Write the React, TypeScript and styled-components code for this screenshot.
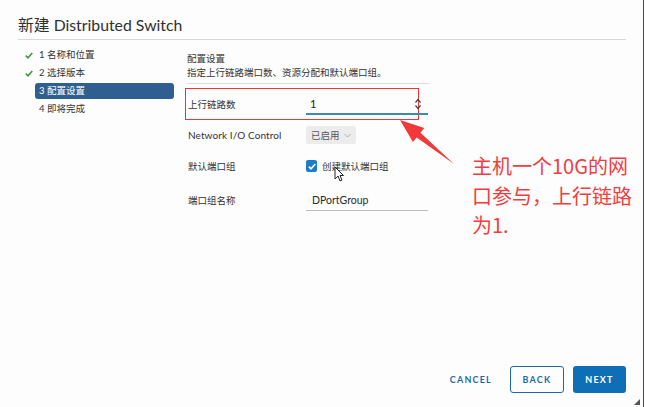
import styled, { createGlobalStyle } from "styled-components";

const GlobalStyle = createGlobalStyle`
  html, body {
    margin: 0;
    background: #ffffff;
    font-family: Lato, "Noto Sans CJK SC", sans-serif;
    color: #333;
  }
`;

const blue = "#1b6aa5";

const Page = styled.div`
  position: relative;
  width: 645px;
  height: 407px;
  overflow: hidden;
`;

const Dialog = styled.div`
  position: relative;
  box-sizing: border-box;
  width: 644px;
  height: 407px;
  background: #fdfdfd;
  border-right: 1px solid #4a4a4a;
  display: flex;
  flex-direction: column;
`;

const Header = styled.div`
  box-sizing: border-box;
  height: 40px;
  margin: 0 17px 0 18px;
  padding-top: 15px;
  border-bottom: 1px solid #d9d9d9;
`;

const Title = styled.h1`
  margin: 0;
  font-size: 15.8px;
  line-height: 20px;
  font-weight: 400;
  color: #2f2f2f;
`;

const Body = styled.div`
  flex: 1;
  display: flex;
`;

const Nav = styled.ul`
  list-style: none;
  margin: 0;
  padding: 6px 0 0 25px;
  width: 149px;
`;

const NavItem = styled.li`
  height: 18px;
  display: flex;
  align-items: center;
`;

const NavIcon = styled.span`
  width: 10px;
  display: flex;
  align-items: center;
`;

const NavLabel = styled.span<{ $active?: boolean }>`
  box-sizing: border-box;
  width: 139px;
  height: 16px;
  padding-left: 4px;
  border-radius: 3px;
  font-size: 9.5px;
  line-height: 16px;
  color: ${(p) => (p.$active ? "#ffffff" : "#333")};
  background: ${(p) => (p.$active ? "#2f5f8e" : "transparent")};
`;

const Content = styled.div`
  margin-left: 13px;
  padding-top: 12px;
  width: 242px;
`;

const SectionTitle = styled.div`
  font-size: 9.5px;
  line-height: 14px;
  color: #333;
`;

const SectionDesc = styled.div`
  font-size: 9.5px;
  line-height: 14px;
  color: #333;
  padding-bottom: 3px;
  border-bottom: 1px solid #dcdcdc;
  margin-bottom: 4px;
`;

const FieldRow = styled.div<{ $h: number; $highlight?: boolean }>`
  position: relative;
  height: ${(p) => p.$h}px;
  display: flex;
  align-items: center;

  &::before {
    content: "";
    display: ${(p) => (p.$highlight ? "block" : "none")};
    position: absolute;
    left: -2px;
    top: 0;
    width: 234px;
    height: ${(p) => p.$h}px;
    box-sizing: border-box;
    border: 1px solid #ef3535;
  }
`;

const FieldLabel = styled.span`
  width: 118px;
  padding-left: 1px;
  font-size: 9.5px;
  color: #333;
  flex-shrink: 0;
  white-space: nowrap;
`;

const LatinLabel = styled(FieldLabel)`
  font-size: 10px;
  letter-spacing: 0.1px;
`;

const NumberInput = styled.div`
  position: relative;
  box-sizing: border-box;
  width: 122px;
  height: 20px;
  padding-left: 4px;
  margin-top: 2px;
  border-bottom: 2px solid #3b8bb0;
  font-size: 11px;
  line-height: 18px;
  color: #222;
`;

const Spinner = styled.svg`
  position: absolute;
  right: 7px;
  top: 3px;
`;

const Select = styled.div`
  box-sizing: border-box;
  height: 18px;
  padding: 0 5px;
  background: #ececec;
  border-radius: 2px;
  display: flex;
  align-items: center;
  gap: 4px;
  font-size: 9.5px;
  color: #555;
  white-space: nowrap;
`;

const CheckWrap = styled.label`
  display: flex;
  align-items: center;
  gap: 5px;
  font-size: 9.5px;
  color: #333;
`;

const CheckBox = styled.span`
  width: 11px;
  height: 12px;
  border-radius: 2px;
  background: #1a7cc9;
  display: flex;
  align-items: center;
  justify-content: center;
`;

const TextInput = styled.div`
  box-sizing: border-box;
  width: 122px;
  height: 20px;
  padding-left: 6px;
  margin-top: 1px;
  border-bottom: 1px solid #bdbdbd;
  font-size: 10.5px;
  line-height: 19px;
  color: #2a2a2a;
`;

const Footer = styled.div`
  display: flex;
  justify-content: flex-end;
  align-items: center;
  padding: 0 17px 14px 0;
`;

const Button = styled.button<{ $variant: "link" | "outline" | "primary" }>`
  box-sizing: border-box;
  height: 27px;
  width: ${(p) => (p.$variant === "link" ? "auto" : p.$variant === "outline" ? "54px" : "53px")};
  margin-left: ${(p) => (p.$variant === "primary" ? "9px" : "0")};
  margin-right: ${(p) => (p.$variant === "link" ? "18px" : "0")};
  padding: 0;
  border-radius: 3px;
  border: ${(p) => (p.$variant === "outline" ? `1px solid ${blue}` : "none")};
  background: ${(p) => (p.$variant === "primary" ? "#0e6fb6" : "transparent")};
  color: ${(p) => (p.$variant === "primary" ? "#ffffff" : blue)};
  font-family: Lato, sans-serif;
  font-size: 9px;
  font-weight: 700;
  letter-spacing: 1.2px;
`;

const Grip = styled.svg`
  position: absolute;
  right: 3px;
  bottom: 2px;
`;

const Cursor = styled.svg`
  position: absolute;
  left: 334px;
  top: 166px;
`;

const Arrow = styled.svg`
  position: absolute;
  left: 0;
  top: 0;
  pointer-events: none;
`;

const Note = styled.div`
  position: absolute;
  left: 472px;
  top: 151px;
  font-family: "Noto Sans CJK SC", sans-serif;
  font-size: 20px;
  line-height: 29.5px;
  color: #f03e3e;
`;

const Check = ({ color }: { color: string }) => (
  <svg width="8" height="7" viewBox="0 0 8 7">
    <path d="M0.8 3.6 L3 5.8 L7.3 1" fill="none" stroke={color} strokeWidth="1.6" />
  </svg>
);

const steps = [
  { label: "1 名称和位置", done: true },
  { label: "2 选择版本", done: true },
  { label: "3 配置设置", active: true },
  { label: "4 即将完成" },
];

export default function App() {
  return (
    <Page>
      <GlobalStyle />
      <Dialog>
        <Header>
          <Title>新建 Distributed Switch</Title>
        </Header>
        <Body>
          <Nav>
            {steps.map((s) => (
              <NavItem key={s.label}>
                <NavIcon>{s.done && <Check color="#3c9a3c" />}</NavIcon>
                <NavLabel $active={s.active}>{s.label}</NavLabel>
              </NavItem>
            ))}
          </Nav>
          <Content>
            <SectionTitle>配置设置</SectionTitle>
            <SectionDesc>指定上行链路端口数、资源分配和默认端口组。</SectionDesc>
            <FieldRow $h={32} $highlight>
              <FieldLabel>上行链路数</FieldLabel>
              <NumberInput>
                1
                <Spinner width="6" height="12" viewBox="0 0 6 12">
                  <path d="M0.5 4.5 L3 1.5 L5.5 4.5" fill="none" stroke="#444" strokeWidth="1.2" />
                  <path d="M0.5 7.5 L3 10.5 L5.5 7.5" fill="none" stroke="#444" strokeWidth="1.2" />
                </Spinner>
              </NumberInput>
            </FieldRow>
            <FieldRow $h={30}>
              <LatinLabel>Network I/O Control</LatinLabel>
              <Select>
                已启用
                <svg width="7" height="5" viewBox="0 0 7 5">
                  <path d="M0.5 1 L3.5 4 L6.5 1" fill="none" stroke="#aaa" strokeWidth="0.9" />
                </svg>
              </Select>
            </FieldRow>
            <FieldRow $h={32}>
              <FieldLabel>默认端口组</FieldLabel>
              <CheckWrap>
                <CheckBox>
                  <Check color="#ffffff" />
                </CheckBox>
                创建默认端口组
              </CheckWrap>
            </FieldRow>
            <FieldRow $h={36}>
              <FieldLabel>端口组名称</FieldLabel>
              <TextInput>DPortGroup</TextInput>
            </FieldRow>
          </Content>
        </Body>
        <Footer>
          <Button $variant="link">CANCEL</Button>
          <Button $variant="outline">BACK</Button>
          <Button $variant="primary">NEXT</Button>
        </Footer>
        <Grip width="6" height="6" viewBox="0 0 6 6">
          <path d="M6 0 L6 6 L0 6 Z" fill="#555" />
        </Grip>
      </Dialog>
      <Cursor width="10" height="16" viewBox="0 0 10 16">
        <path d="M1 1 L1 13 L4 10 L6 15 L8 14 L6 9.5 L9.5 9.5 Z" fill="#fff" stroke="#222" strokeWidth="1" />
      </Cursor>
      <Arrow width="645" height="407" viewBox="0 0 645 407">
        <polygon
          points="400,120 424.3,128.1 420.5,132.8 454,164 416.7,137.4 412.9,142.1"
          fill="#f03a3a"
        />
      </Arrow>
      <Note>
        主机一个10G的网
        <br />
        口参与，上行链路
        <br />
        为1.
      </Note>
    </Page>
  );
}
